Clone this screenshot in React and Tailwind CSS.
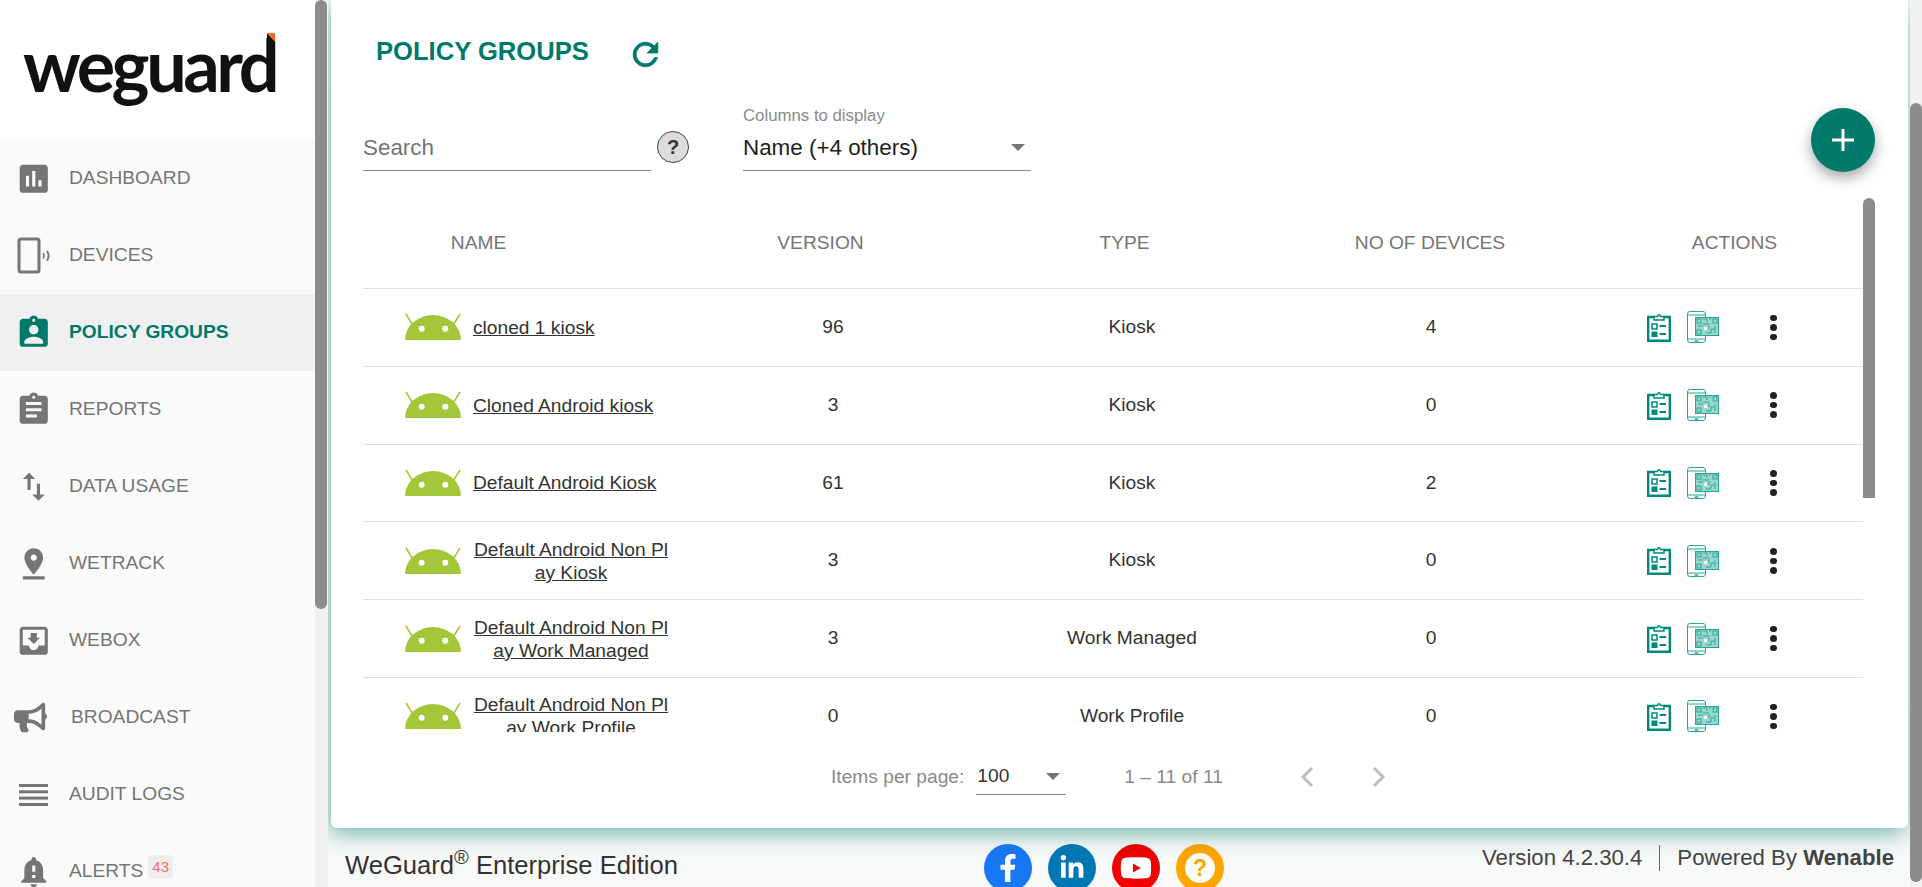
import React from "react";
import { FaBullhorn, FaFacebookF, FaLinkedinIn, FaYoutube } from "react-icons/fa";

const arial = { fontFamily: '"Liberation Sans", Arial, sans-serif' };

const navIcons = {
  dashboard: "M19 3H5c-1.1 0-2 .9-2 2v14c0 1.1.9 2 2 2h14c1.1 0 2-.9 2-2V5c0-1.1-.9-2-2-2zM9 17H7v-7h2v7zm4 0h-2V7h2v10zm4 0h-2v-4h2v4z",
  policy: "M19 3h-4.18C14.4 1.84 13.3 1 12 1c-1.3 0-2.4.84-2.82 2H5c-1.1 0-2 .9-2 2v14c0 1.1.9 2 2 2h14c1.1 0 2-.9 2-2V5c0-1.1-.9-2-2-2zm-7 0c.55 0 1 .45 1 1s-.45 1-1 1-1-.45-1-1 .45-1 1-1zm0 4c1.66 0 3 1.34 3 3s-1.34 3-3 3-3-1.34-3-3 1.34-3 3-3zm6 12H6v-1.4c0-2 4-3.1 6-3.1s6 1.1 6 3.1V19z",
  reports: "M19 3h-4.18C14.4 1.84 13.3 1 12 1c-1.3 0-2.4.84-2.82 2H5c-1.1 0-2 .9-2 2v14c0 1.1.9 2 2 2h14c1.1 0 2-.9 2-2V5c0-1.1-.9-2-2-2zm-7 0c.55 0 1 .45 1 1s-.45 1-1 1-1-.45-1-1 .45-1 1-1zm2 14H7v-2h7v2zm3-4H7v-2h10v2zm0-4H7V7h10v2z",
  usage: "M9 3L5 6.99h3V14h2V6.99h3L9 3zm7 14.01V10h-2v7.01h-3L15 21l4-3.99h-3z",
  track: "M18 8c0-3.31-2.69-6-6-6S6 4.69 6 8c0 4.5 6 11 6 11s6-6.5 6-11zm-8 0c0-1.1.9-2 2-2s2 .9 2 2-.89 2-2 2c-1.1 0-2-.9-2-2zM5 20v2h14v-2H5z",
  box: "M19 3H4.99c-1.11 0-1.98.89-1.98 2L3 19c0 1.1.88 2 1.99 2H19c1.1 0 2-.9 2-2V5c0-1.11-.9-2-2-2zm0 12h-4c0 1.66-1.35 3-3 3s-3-1.34-3-3H4.99V5H19v10zm-3-5h-2V7h-4v3H8l4 4 4-4z",
  alerts: "M18 16v-5c0-3.07-1.64-5.64-4.5-6.32V4c0-.83-.67-1.5-1.5-1.5s-1.5.67-1.5 1.5v.68C7.63 5.36 6 7.92 6 11v5l-2 2v1h16v-1l-2-2zm-5 0h-2v-2h2v2zm0-4h-2V8h2v4zm-1 10c1.1 0 2-.9 2-2h-4c0 1.1.9 2 2 2z",
};

const MatIcon = ({ d, className }) => (
  <svg viewBox="0 0 24 24" fill="currentColor" className={className}>
    <path d={d} />
  </svg>
);

const DevicesIcon = () => (
  <svg viewBox="0 0 34 38" className="w-[34px] h-[38px] ml-[2px]" fill="none" stroke="currentColor">
    <rect x="2" y="2" width="20" height="33" rx="2" strokeWidth="3" />
    <path d="M26 16c1 1.5 1 4 0 5.5" strokeWidth="1.6" />
    <path d="M30 14c2 3 2 6.500 0 9.500" strokeWidth="2" />
  </svg>
);

const AuditIcon = () => (
  <svg viewBox="0 0 29 22" className="w-[29px] h-[22px] ml-[4px]" fill="currentColor">
    <rect y="0" width="29" height="3" />
    <rect y="6.300" width="29" height="3" />
    <rect y="12.600" width="29" height="3" />
    <rect y="19" width="29" height="3" />
  </svg>
);

const navItems = [
  { label: "DASHBOARD", icon: <MatIcon d={navIcons.dashboard} className="w-[37.5px] h-[37.5px]" /> },
  { label: "DEVICES", icon: <DevicesIcon /> },
  { label: "POLICY GROUPS", icon: <MatIcon d={navIcons.policy} className="w-[37.5px] h-[37.5px]" />, active: true },
  { label: "REPORTS", icon: <MatIcon d={navIcons.reports} className="w-[37.5px] h-[37.5px]" /> },
  { label: "DATA USAGE", icon: <MatIcon d={navIcons.usage} className="w-[37.5px] h-[37.5px]" /> },
  { label: "WETRACK", icon: <MatIcon d={navIcons.track} className="w-[37.5px] h-[37.5px]" /> },
  { label: "WEBOX", icon: <MatIcon d={navIcons.box} className="w-[37.5px] h-[37.5px]" /> },
  { label: "BROADCAST", icon: <FaBullhorn className="w-[33px] h-[33px] -ml-[1px]" />, shift: true },
  { label: "AUDIT LOGS", icon: <AuditIcon /> },
  { label: "ALERTS", icon: <MatIcon d={navIcons.alerts} className="w-[37.5px] h-[37.5px]" />, badge: 43 },
];

const rows = [
  { name: "cloned 1 kiosk", version: 96, type: "Kiosk", devices: 4 },
  { name: "Cloned Android kiosk", version: 3, type: "Kiosk", devices: 0 },
  { name: "Default Android Kiosk", version: 61, type: "Kiosk", devices: 2 },
  { name: "Default Android Non Play Kiosk", version: 3, type: "Kiosk", devices: 0 },
  { name: "Default Android Non Play Work Managed", version: 3, type: "Work Managed", devices: 0 },
  { name: "Default Android Non Play Work Profile", version: 0, type: "Work Profile", devices: 0 },
];

const AndroidIcon = () => (
  <svg viewBox="0 0 58 28" className="w-[58px] h-[28px] shrink-0">
    <path d="M2 1l8 13M56 1l-8 13" stroke="#a4c639" strokeWidth="1.500" />
    <path d="M1 27A28 25 0 0 1 57 27z" fill="#a4c639" />
    <circle cx="17.700" cy="15.700" r="3" fill="#fff" />
    <circle cx="41.300" cy="15.700" r="3" fill="#fff" />
  </svg>
);

const ClipboardIcon = () => (
  <svg viewBox="0 0 24 29" className="w-[24px] h-[29px]" fill="none" stroke="#00897b">
    <path d="M7 4H1.200v23.800h21.600V4H17" strokeWidth="2.400" />
    <path d="M7 7V3.500h3.500C11 1 13 1 13.500 3.500H17V7z" strokeWidth="1.500" fill="#fff" />
    <rect x="5" y="11" width="5" height="5" strokeWidth="1.500" />
    <rect x="4.500" y="18.500" width="6" height="5.500" fill="#00897b" stroke="none" />
    <path d="M12.500 13h6.500M12.500 21h6.500" strokeWidth="2" />
  </svg>
);

const QrPhoneIcon = () => (
  <svg viewBox="0 0 32 32" className="w-[32px] h-[32px]" fill="none">
    <rect x="0.500" y="0.500" width="18" height="31" rx="2.500" stroke="#26a69a" strokeWidth="1" />
    <path d="M1 4h17M1 28h17" stroke="#26a69a" strokeWidth="1" />
    <path d="M7.500 30h4" stroke="#00897b" strokeWidth="1.200" />
    <rect x="8" y="6" width="24" height="18" fill="#9ad6ca" />
    <rect x="8.500" y="6.500" width="23" height="18" stroke="#26a69a" strokeWidth="1" />
    <rect x="10" y="8" width="4" height="4" stroke="#26a69a" strokeWidth="1" />
    <rect x="26" y="8" width="4" height="4" stroke="#26a69a" strokeWidth="1" />
    <rect x="10" y="19" width="4" height="4" stroke="#26a69a" strokeWidth="1" />
    <path d="M16 8h4v3M22 8h2M16 13h6M11 15h5M22 14v4M19 22h5v-4h3M28 15v7" stroke="#26a69a" strokeWidth="1" />
    <rect x="17" y="16" width="3" height="3" fill="#fff" />
  </svg>
);

const Caret = () => (
  <svg viewBox="0 0 14 7" className="w-[14px] h-[7px]" fill="#757575">
    <path d="M0 0h14L7 7z" />
  </svg>
);

const Chevron = ({ d }) => (
  <svg viewBox="0 0 15 22" className="w-[15px] h-[22px]" fill="none" stroke="#bdbdbd" strokeWidth="3">
    <path d={d} />
  </svg>
);

const Sidebar = () => (
  <aside className="w-[315px] shrink-0 bg-[#fafafa] overflow-hidden">
    <div className="h-[140px] bg-white relative pl-[23px] pt-[19px]">
      <div className="text-[72px] leading-[90px] font-bold text-[#111] tracking-[-3.5px]" style={{ fontFamily: "Lato, sans-serif" }}>weguard</div>
      <svg viewBox="0 0 8 20" className="absolute left-[267px] top-[33px] w-[8px] h-[20px]">
        <path d="M0 0l8 9v11H0z" fill="#111" />
        <path d="M0 0h8v9z" fill="#f26b21" />
      </svg>
    </div>
    {navItems.map((item) => (
      <div
        key={item.label}
        className={`h-[77px] flex items-center text-[19.2px] ${item.active ? "bg-[#f0f0f0] text-[#00796b]" : "text-[#757575]"}`}
      >
        <div className="w-[69px] pl-[15px] shrink-0 flex items-center justify-start">{item.icon}</div>
        <span className={`${item.active ? "font-bold" : ""} ${item.shift ? "ml-[2px]" : ""}`}>{item.label}</span>
        {item.badge && (
          <span className="ml-[5px] -mt-[10px] px-[4px] rounded bg-[#eeeeee] text-[#ff6b6b] text-[15px] leading-[23px]">{item.badge}</span>
        )}
      </div>
    ))}
  </aside>
);

const Filters = () => (
  <div className="h-[71px] flex items-end relative">
    <div className="w-[288px] h-[53px] pt-[7px] border-b-[1.5px] border-[#8c8c8c] flex items-center text-[22.4px] text-[#757575]">Search</div>
    <div className="w-[32px] h-[32px] ml-[6px] mb-[8px] rounded-full bg-[#dcdcdc] border border-[#444] flex items-center justify-center text-[20px] font-bold text-[#333]">?</div>
    <div className="w-[288px] ml-[54px]">
      <div className="text-[16.8px] leading-[18px] text-[#8a8a8a] translate-y-[7px]">Columns to display</div>
      <div className="h-[53px] pt-[7px] border-b-[1.5px] border-[#8c8c8c] flex items-center justify-between pr-[6px] text-[22.4px] text-[#222]">
        <span>Name (+4 others)</span>
        <Caret />
      </div>
    </div>
  </div>
);

const PolicyTable = () => (
  <div className="h-[534px] mt-[27px] flex overflow-hidden">
    <div className="flex-1 min-w-0">
      <div className="h-[91px] grid grid-cols-[231px_453px_155px_456px_153px] items-center text-center text-[19.2px] text-[#757575] border-b border-[#e0e0e0]">
        <div>NAME</div>
        <div>VERSION</div>
        <div>TYPE</div>
        <div>NO OF DEVICES</div>
        <div>ACTIONS</div>
      </div>
      {rows.map((row) => (
        <div
          key={row.name}
          className="h-[77.8px] grid grid-cols-[311px_318px_280px_318px_273px] items-center text-center text-[19.2px] text-[#333] border-b border-[#e0e0e0]"
        >
          <div className="flex items-center pl-[41px]">
            <AndroidIcon />
            <a className="max-w-[196px] ml-[11px] underline break-all leading-[23px]">{row.name}</a>
          </div>
          <div>{row.version}</div>
          <div>{row.type}</div>
          <div>{row.devices}</div>
          <div className="flex items-center pl-[57px]">
            <ClipboardIcon />
            <div className="ml-[16px]"><QrPhoneIcon /></div>
            <div className="ml-[51px] flex flex-col gap-[3px]">
              <span className="w-[6.500px] h-[6.500px] rounded-full bg-[#222]" />
              <span className="w-[6.500px] h-[6.500px] rounded-full bg-[#222]" />
              <span className="w-[6.500px] h-[6.500px] rounded-full bg-[#222]" />
            </div>
          </div>
        </div>
      ))}
    </div>
    <div className="w-[12px] shrink-0">
      <div className="h-[300px] rounded-t-full rounded-b-md bg-[#8c8c8c]" />
    </div>
  </div>
);

const Pagination = () => (
  <div className="h-[96px] flex items-start pl-[468px] pt-[26px]">
    <span className="text-[19.2px] leading-[38px] text-[#8a8a8a]">Items per page:</span>
    <div className="w-[90px] h-[37px] ml-[12px] pt-[1px] border-b-[1.5px] border-[#8c8c8c] flex items-center justify-between pl-[1px] pr-[6px] text-[19.2px] text-[#333]">
      <span>100</span>
      <Caret />
    </div>
    <span className="ml-[58px] text-[19.2px] leading-[38px] text-[#8a8a8a]">1 – 11 of 11</span>
    <div className="ml-[77px] flex gap-[56px] pt-[8px]">
      <Chevron d="M12 2L3 11l9 9" />
      <Chevron d="M3 2l9 9-9 9" />
    </div>
  </div>
);

const Footer = () => (
  <footer className="h-[59px] flex items-start pt-[16px]">
    <div className="w-[656px] shrink-0 pl-[17px] text-[25.6px] leading-[30px] text-[#333] pt-[6px]">
      WeGuard<sup className="text-[20px]">®</sup> Enterprise Edition
    </div>
    <div className="flex gap-[16px]">
      <div className="w-[48px] h-[48px] rounded-full bg-[#1877f2] text-white flex items-center justify-center text-[28px]"><FaFacebookF /></div>
      <div className="w-[48px] h-[48px] rounded-full bg-[#0077b5] text-white flex items-center justify-center text-[26px]"><FaLinkedinIn /></div>
      <div className="w-[48px] h-[48px] rounded-full bg-[#f00000] text-white flex items-center justify-center text-[32px]"><FaYoutube /></div>
      <div className="w-[48px] h-[48px] rounded-full bg-[#ffa500] flex items-center justify-center">
        <div className="w-[30px] h-[30px] rounded-full bg-white text-[#ffa500] font-bold text-[23px] leading-[30px] text-center">?</div>
      </div>
    </div>
    <div className="ml-auto pr-[16px] flex items-center text-[22.2px] text-[#444] h-[26px] mt-[1px]">
      <span>Version 4.2.30.4</span>
      <span className="w-px h-[26px] bg-[#666] mx-[17px]" />
      <span>Powered By <b>Wenable</b></span>
    </div>
  </footer>
);

const App = () => (
  <div className="w-[1922px] h-[887px] flex overflow-hidden bg-[#f8f9f9]" style={arial}>
    <Sidebar />
    <div className="w-[13px] shrink-0 bg-[#f1f1f1]">
      <div className="w-[12px] h-[609px] rounded-full bg-[#8c8c8c]" />
    </div>
    <main className="w-[1582px] shrink-0 overflow-hidden bg-gradient-to-b from-white to-[#f8f9f9]">
      <section className="relative ml-[3px] mr-[2px] h-[828px] bg-white rounded-b-md pl-[32px] pr-[33px] shadow-[-2px_4px_24px_rgba(0,121,107,0.6)]">
        <div className="h-[100px] flex items-start pl-[13px] pt-[35px]">
          <h1 className="text-[25.6px] leading-[32px] font-bold text-[#00796b]">POLICY GROUPS</h1>
          <svg viewBox="0 0 24 24" className="w-[37px] h-[37px] ml-[38px] mt-[1px]" fill="#00796b" stroke="#00796b" strokeWidth="0.500">
            <path d="M17.650 6.350C16.200 4.900 14.210 4 12 4c-4.420 0-7.990 3.580-7.990 8s3.570 8 7.990 8c3.730 0 6.840-2.550 7.730-6h-2.080c-.82 2.330-3.040 4-5.650 4-3.310 0-6-2.690-6-6s2.690-6 6-6c1.660 0 3.140.69 4.220 1.780L13 11h7V4l-2.350 2.350z" />
          </svg>
        </div>
        <Filters />
        <PolicyTable />
        <Pagination />
        <button className="absolute left-[1480px] top-[108px] w-[64px] h-[64px] rounded-full bg-[#00796b] text-white flex items-center justify-center shadow-[0_6px_14px_rgba(0,0,0,0.35)]">
          <svg viewBox="0 0 24 24" className="w-[24px] h-[24px]" fill="none" stroke="currentColor" strokeWidth="3">
            <path d="M12 1v22M1 12h22" />
          </svg>
        </button>
      </section>
      <Footer />
    </main>
    <div className="w-[12px] shrink-0 bg-[#f1f1f1] pt-[103px]">
      <div className="h-[779px] rounded-full bg-[#8c8c8c]" />
    </div>
  </div>
);

export default App;
